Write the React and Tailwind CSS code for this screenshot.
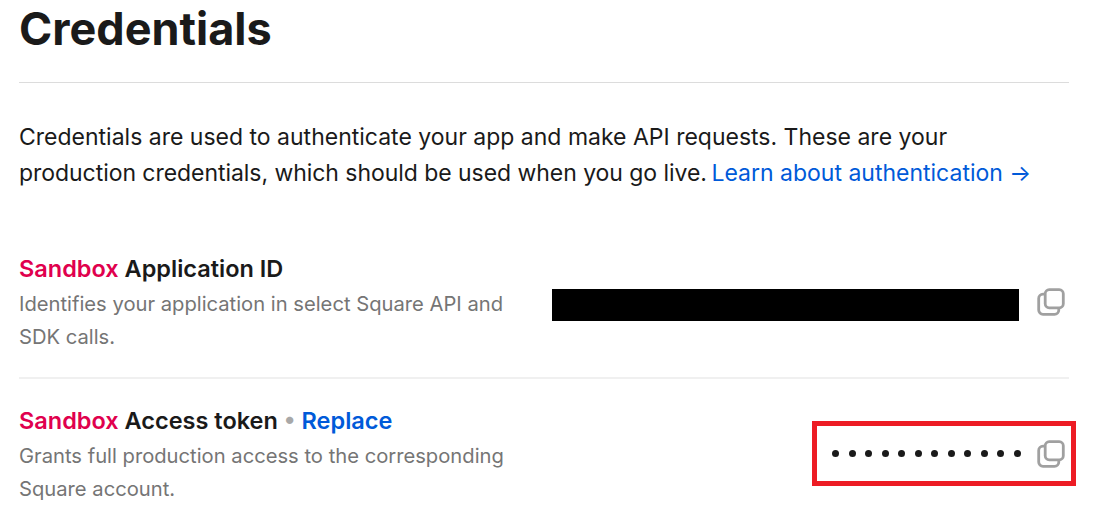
import React from "react";

// Overlapping squares used for the copy buttons
function CopyIcon() {
  return (
    <svg width="28" height="28" viewBox="0 0 28 28" fill="none" stroke="#a0a0a0" strokeWidth="2.8">
      <rect x="8.2" y="1.7" width="18.1" height="18.1" rx="4" />
      <path d="M8.2 6.2H6A4.3 4.3 0 0 0 1.7 10.5V22A4.3 4.3 0 0 0 6 26.3H17.5A4.3 4.3 0 0 0 21.8 22V19.8" />
    </svg>
  );
}

function CredentialRow({ label, extra, description, children }) {
  return (
    <div className="flex items-start">
      <div className="w-[533px] shrink-0">
        <div className="text-[23.5px] leading-[32px] font-semibold text-[#1a1a1a]">
          <span className="text-[#e0004d]">Sandbox</span> {label}
          {extra}
        </div>
        <p className="mt-[2px] text-[20.2px] leading-[33px] text-[#757575]">{description}</p>
      </div>
      {children}
    </div>
  );
}

export default function App() {
  return (
    <div className="h-[521px] w-[1102px] overflow-hidden bg-white pl-[19px] font-['Inter',sans-serif]">
      <div className="w-[1050px]">
        <h1 className="h-[82px] pt-[3px] text-[45px] leading-[52px] font-bold text-[#1a1a1a]">
          Credentials
        </h1>
        <div className="h-px bg-[#dcdcdc]" />
        <p className="mt-[36px] text-[23px] leading-[36px] text-[#1a1a1a]">
          Credentials are used to authenticate your app and make API requests. These are your
          <br />
          <span className="tracking-[-0.05px]">
            production credentials, which should be used when you go live.
          </span>{" "}
          <a className="ml-[-2px] text-[#005ad9]">Learn about authentication →</a>
        </p>

        <div className="mt-[62px]">
          <CredentialRow
            label="Application ID"
            description={
              <>
                Identifies your application in select Square API and
                <br />
                SDK calls.
              </>
            }
          >
            <div className="flex flex-1 items-start justify-between pt-[36px]">
              <div className="h-[32px] w-[467px] bg-black" />
              <div className="mt-[-1px] mr-[4px]">
                <CopyIcon />
              </div>
            </div>
          </CredentialRow>
        </div>

        <div className="mt-[24px] h-[2px] bg-[#f0f0f0]" />

        <div className="mt-[26px]">
          <CredentialRow
            label="Access token"
            extra={
              <>
                <span className="text-[#a8a8a8]"> • </span>
                <a className="text-[#005ad9]">Replace</a>
              </>
            }
            description={
              <>
                Grants full production access to the corresponding
                <br />
                Square account.
              </>
            }
          >
            <div className="mt-[16px] mr-[-7px] ml-auto flex h-[65px] w-[264px] shrink-0 items-center justify-between border-[5px] border-[#ed1c24] pr-[6px] pl-[15px]">
              <div className="flex gap-[9.5px]">
                {Array.from({ length: 12 }).map((_, i) => (
                  <span key={i} className="h-[7px] w-[7px] rounded-full bg-[#1a1a1a]" />
                ))}
              </div>
              <CopyIcon />
            </div>
          </CredentialRow>
        </div>
      </div>
    </div>
  );
}
